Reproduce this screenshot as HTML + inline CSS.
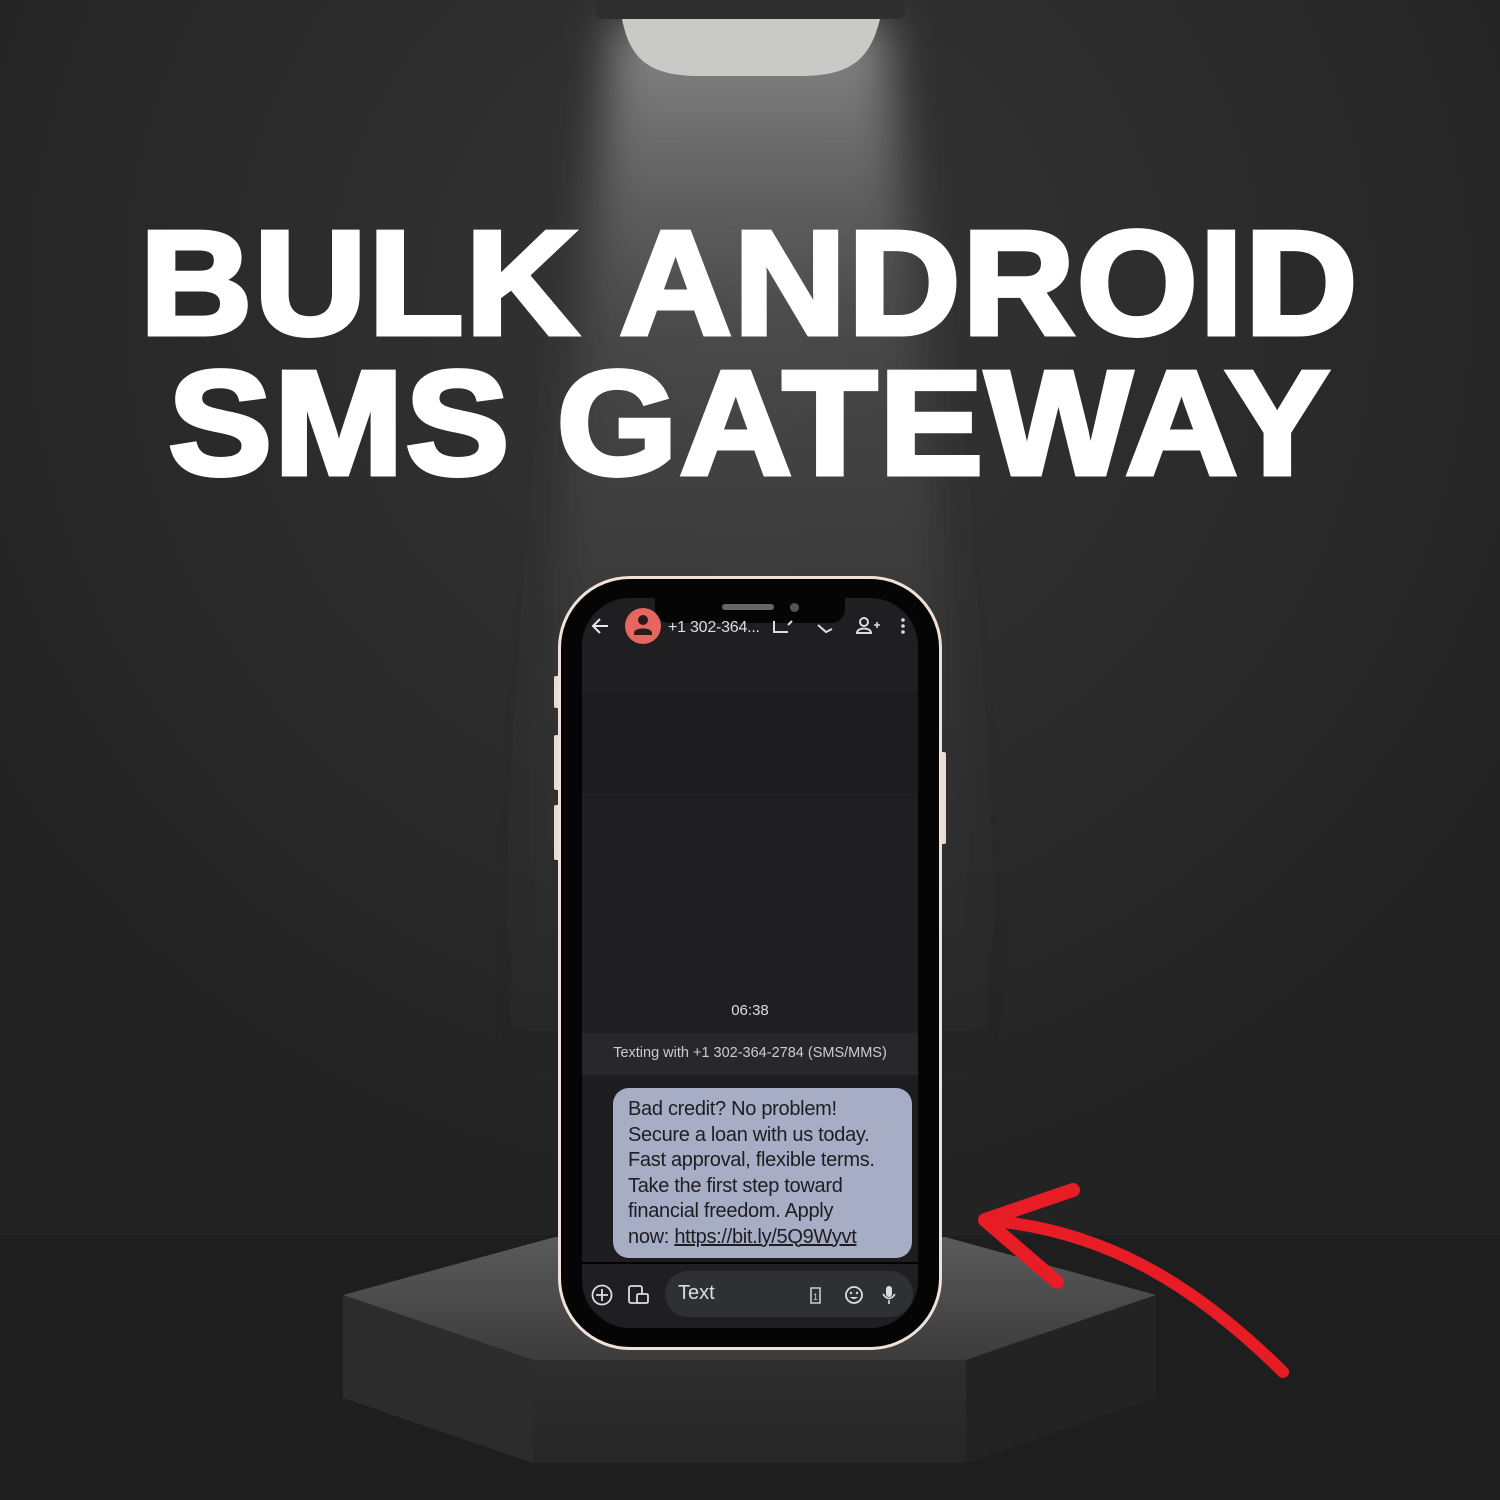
<!DOCTYPE html>
<html><head><meta charset="utf-8"><style>
*{margin:0;padding:0;box-sizing:border-box}
body{width:1500px;height:1500px;overflow:hidden;background:#2a2a2a;position:relative;font-family:"Liberation Sans",sans-serif}
.abs{position:absolute}
.title{position:absolute;left:0;width:1500px;text-align:center;color:#fff;font-weight:900;font-size:148px;line-height:1;letter-spacing:2px;-webkit-text-stroke:5px #fff;white-space:nowrap}
.title span{display:inline-block;transform:scaleX(1.05)}
.bubble{font-size:20px;color:#1d1d22;line-height:25.5px;letter-spacing:-0.3px}
</style></head><body>
<svg class="abs" style="left:0;top:0" width="1500" height="1500">
<defs>
<radialGradient id="bg" cx="750" cy="300" r="900" gradientUnits="userSpaceOnUse">
<stop offset="0" stop-color="#353535"/><stop offset="1" stop-color="#232323"/></radialGradient>
<linearGradient id="cone" x1="0" y1="0" x2="0" y2="1">
<stop offset="0" stop-color="#9a9a9a" stop-opacity="0.85"/><stop offset="0.3" stop-color="#666" stop-opacity="0.4"/><stop offset="1" stop-color="#444" stop-opacity="0"/></linearGradient>
<linearGradient id="front" x1="0" y1="0" x2="0" y2="1">
<stop offset="0" stop-color="#2e2e2e"/><stop offset="1" stop-color="#262626"/></linearGradient>
<linearGradient id="topf" x1="0" y1="0" x2="0" y2="1">
<stop offset="0" stop-color="#5a5a5a"/><stop offset="1" stop-color="#3c3c3c"/></linearGradient>
<filter id="blur"><feGaussianBlur stdDeviation="22"/></filter>
</defs>
<rect width="1500" height="1500" fill="url(#bg)"/>
<rect y="1235" width="1500" height="265" fill="#1e1e1e"/>
<polygon points="615,20 885,20 1000,1100 500,1100" fill="url(#cone)" filter="url(#blur)"/>
<rect x="595" y="-10" width="310" height="29" rx="8" fill="#2e2e2e"/>
<path d="M622,19 H880 C870,60 850,76 800,76 H700 C650,76 630,60 622,19 Z" fill="#c9c9c7"/>
<polygon points="343,1295 555,1237 945,1237 1156,1295 966,1360 533,1360" fill="url(#topf)"/>
<polygon points="343,1295 533,1360 533,1463 343,1398" fill="#2c2c2c"/>
<polygon points="966,1360 1156,1295 1156,1398 966,1463" fill="#232323"/>
<polygon points="533,1360 966,1360 966,1463 533,1463" fill="url(#front)"/>
</svg>
<div class="title" style="top:210px"><span>BULK ANDROID</span></div>
<div class="title" style="top:350px"><span>SMS GATEWAY</span></div>
<div class="abs" style="left:554px;top:676px;width:6px;height:32px;background:#e8dcd4;border-radius:2px"></div>
<div class="abs" style="left:554px;top:735px;width:6px;height:55px;background:#e8dcd4;border-radius:2px"></div>
<div class="abs" style="left:554px;top:805px;width:6px;height:55px;background:#e8dcd4;border-radius:2px"></div>
<div class="abs" style="left:940px;top:752px;width:6px;height:92px;background:#e8dcd4;border-radius:2px"></div>
<div class="abs" style="left:558px;top:576px;width:384px;height:774px;border-radius:72px;background:#050505;border:3px solid #f0e2d8"></div>
<div class="abs" style="left:582px;top:598px;width:336px;height:730px;border-radius:48px;background:#1f1f21;overflow:hidden">
  <div class="abs" style="left:0;top:95px;width:336px;height:100px;background:#1c1c1e"></div>
  <div class="abs" style="left:0;top:435px;width:336px;height:42px;background:#28282a"></div>
  <div class="abs" style="left:0;top:477px;width:336px;height:187px;background:#1d1d1f"></div>
  <div class="abs" style="left:0;top:664px;width:336px;height:2px;background:#000"></div>
</div>
<div class="abs" style="left:655px;top:596px;width:190px;height:27px;background:#050505;border-radius:0 0 14px 14px"></div>
<div class="abs" style="left:722px;top:604px;width:52px;height:6px;background:#666;border-radius:3px"></div>
<div class="abs" style="left:790px;top:603px;width:9px;height:9px;background:#555;border-radius:50%"></div>
<svg class="abs" style="left:582px;top:605px" width="336" height="45">
<path d="M26,21 H12 M18,14 L11,21 L18,28" stroke="#e8e8e8" stroke-width="2" fill="none"/>
<circle cx="61" cy="21" r="18" fill="#e5675f"/>
<circle cx="61" cy="15" r="5" fill="#2a1a1a"/><path d="M52,28 C52,22 70,22 70,28 L70,30 H52Z" fill="#2a1a1a"/>
<text x="86" y="27" fill="#ddd" font-size="16" font-family="Liberation Sans" textLength="92">+1 302-364...</text>
<path d="M192,16 V27 H206 M206,20 L210,16" stroke="#ddd" stroke-width="2" fill="none"/>
<path d="M236,20 L244,27 L250,24" stroke="#ddd" stroke-width="2" fill="none"/>
<circle cx="282" cy="17" r="4" stroke="#ddd" stroke-width="2" fill="none"/><path d="M275,28 C275,22 289,22 289,28Z" stroke="#ddd" stroke-width="2" fill="none"/><path d="M292,20 H298 M295,17 V23" stroke="#ddd" stroke-width="1.6"/>
<circle cx="321" cy="15" r="1.8" fill="#ddd"/><circle cx="321" cy="21" r="1.8" fill="#ddd"/><circle cx="321" cy="27" r="1.8" fill="#ddd"/>
</svg>
<div class="abs" style="left:582px;top:1002px;width:336px;text-align:center;color:#ddd;font-size:15px">06:38</div>
<div class="abs" style="left:582px;top:1045px;width:336px;text-align:center;color:#ccc;font-size:14.5px">Texting with +1 302-364-2784 (SMS/MMS)</div>
<div class="abs bubble" style="left:613px;top:1088px;width:299px;height:170px;background:#a8adc6;border-radius:16px;padding:9px 0 0 15px">Bad credit? No problem!<br>Secure a loan with us today.<br>Fast approval, flexible terms.<br>Take the first step toward<br>financial freedom. Apply<br>now: <span style="text-decoration:underline">https://bit.ly/5Q9Wyvt</span></div>
<div class="abs" style="left:665px;top:1271px;width:248px;height:46px;background:#2f3033;border-radius:23px"></div>
<div class="abs" style="left:678px;top:1282px;color:#ddd;font-size:20px">Text</div>
<svg class="abs" style="left:582px;top:1275px" width="336" height="40">
<circle cx="20" cy="20" r="9.5" stroke="#ddd" stroke-width="1.8" fill="none"/><path d="M14,20 H26 M20,14 V26" stroke="#ddd" stroke-width="1.8"/>
<rect x="47" y="11" width="13" height="17" rx="2" stroke="#ddd" stroke-width="1.8" fill="none"/><rect x="55" y="19" width="11" height="9" rx="1.5" fill="#1f1f21" stroke="#ddd" stroke-width="1.8"/>
<path d="M229,13 H238 V28 H229 V16Z" stroke="#ccc" stroke-width="1.6" fill="none"/><text x="231" y="25" fill="#ccc" font-size="9">1</text>
<circle cx="272" cy="20" r="8" stroke="#ddd" stroke-width="1.8" fill="none"/><circle cx="269" cy="18" r="1.2" fill="#ddd"/><circle cx="275" cy="18" r="1.2" fill="#ddd"/><path d="M268,22 Q272,26 276,22Z" fill="#ddd"/>
<rect x="304" y="11" width="6" height="11" rx="3" fill="#ddd"/><path d="M301,19 Q307,28 313,19 M307,25 V29" stroke="#ddd" stroke-width="1.6" fill="none"/>
</svg>
<svg class="abs" style="left:0;top:0" width="1500" height="1500">
<path d="M1283,1372 C1200,1290 1110,1230 985,1220" stroke="#e81c24" stroke-width="12" fill="none" stroke-linecap="round"/>
<path d="M1073,1190 L985,1220 L1057,1282" stroke="#e81c24" stroke-width="14" fill="none" stroke-linecap="round" stroke-linejoin="round"/>
</svg>
</body></html>
